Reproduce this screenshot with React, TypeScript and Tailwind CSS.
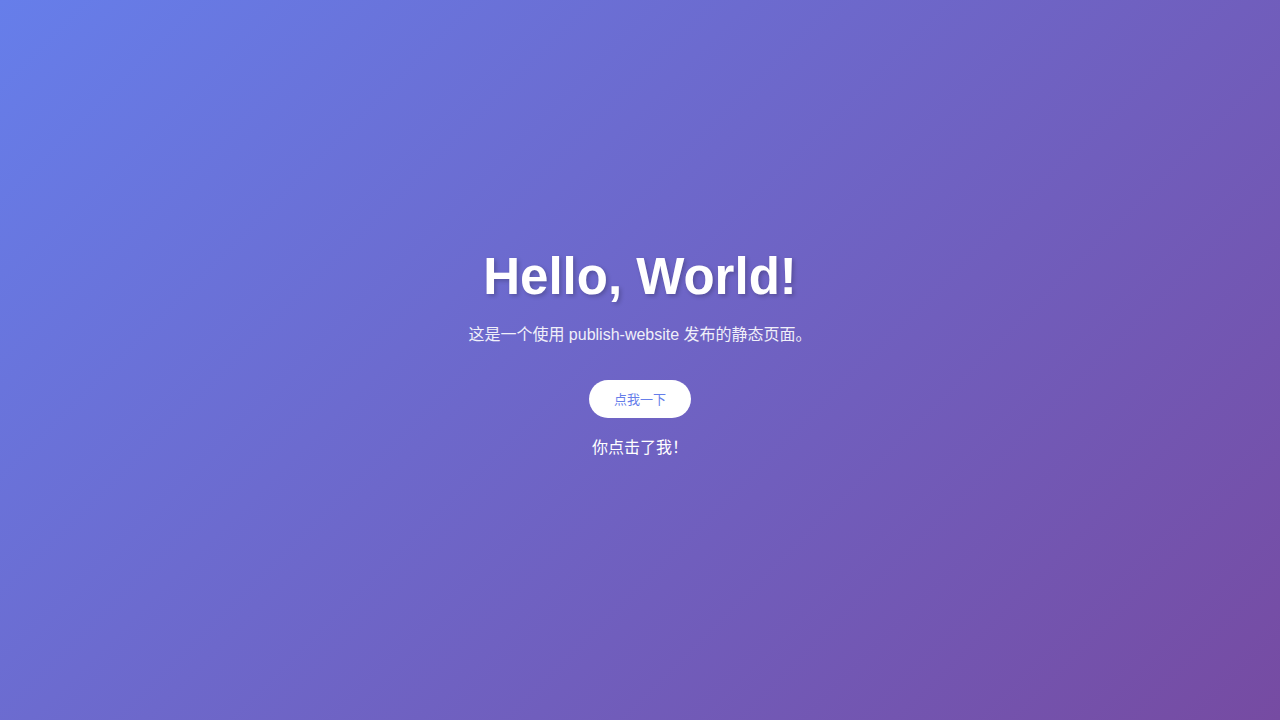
import React, { useState } from 'react';

const App: React.FC = () => {
  const [clicked] = useState(true);

  return (
    <div
      className="flex min-h-screen flex-col items-center justify-center bg-[linear-gradient(135deg,#667eea_0%,#764ba2_100%)] pb-3 text-center text-white"
      style={{ fontFamily: '"Liberation Sans", Arial, "Noto Sans CJK SC", sans-serif' }}
    >
      <h1 className="mb-[17px] text-[51px] font-bold leading-[1.15] [text-shadow:2px_2px_4px_rgba(0,0,0,0.22)]">
        Hello, World!
      </h1>
      <p className="mb-[33px] text-base opacity-90">这是一个使用 publish-website 发布的静态页面。</p>
      <button className="h-[38px] rounded-full bg-white px-[25px] text-[13px] text-[#667eea]">
        点我一下
      </button>
      {clicked && <p className="mt-[18px] text-base">你点击了我！</p>}
    </div>
  );
};

export default App;
